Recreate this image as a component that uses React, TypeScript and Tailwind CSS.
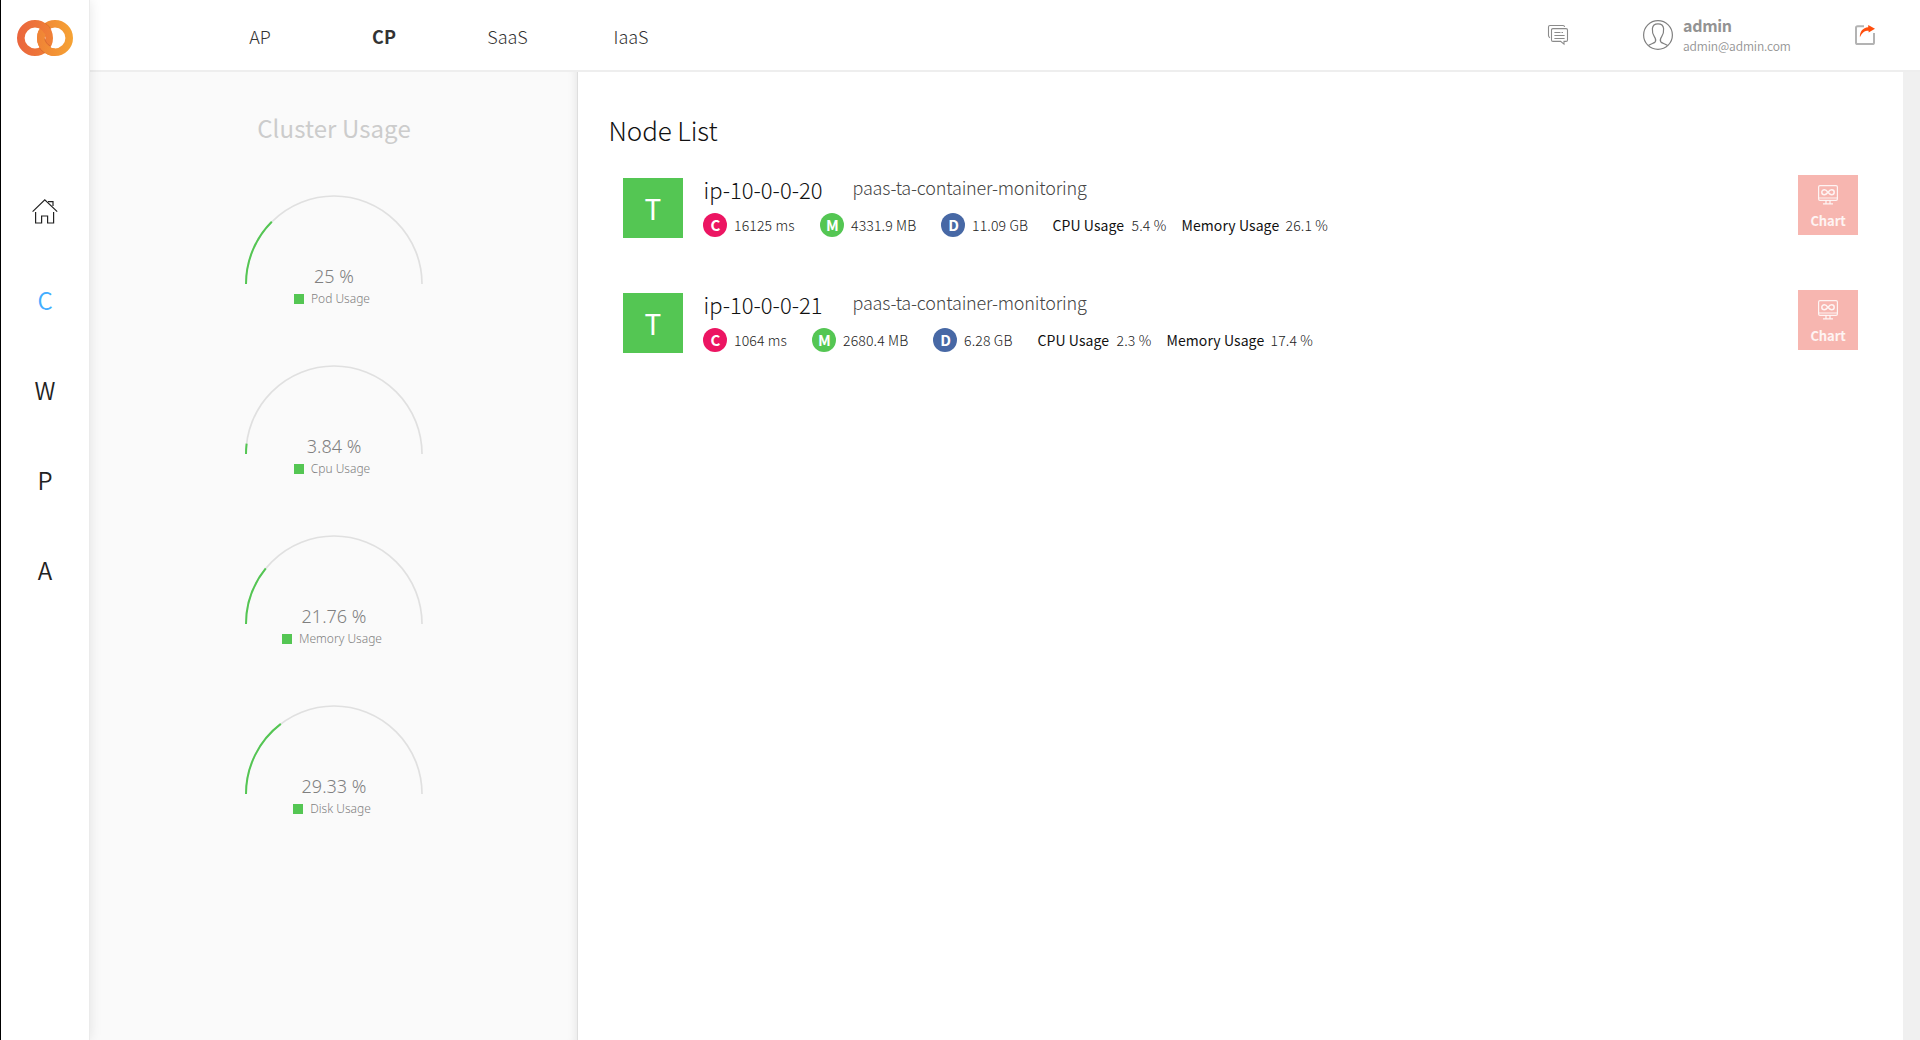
import React from 'react';

const gauges = [
  { label: 'Pod Usage', value: 25 },
  { label: 'Cpu Usage', value: 3.84 },
  { label: 'Memory Usage', value: 21.76 },
  { label: 'Disk Usage', value: 29.33 },
];

const nodes = [
  {
    name: 'ip-10-0-0-20',
    stats: [
      { tag: 'C', color: 'bg-[#ec1562]', value: '16125 ms', width: 'w-[117px]' },
      { tag: 'M', color: 'bg-[#54c653]', value: '4331.9 MB', width: 'w-[121px]' },
      { tag: 'D', color: 'bg-[#4768a5]', value: '11.09 GB', width: 'w-[111.5px]' },
    ],
    cpu: '5.4 %',
    memory: '26.1 %',
  },
  {
    name: 'ip-10-0-0-21',
    stats: [
      { tag: 'C', color: 'bg-[#ec1562]', value: '1064 ms', width: 'w-[109px]' },
      { tag: 'M', color: 'bg-[#54c653]', value: '2680.4 MB', width: 'w-[121px]' },
      { tag: 'D', color: 'bg-[#4768a5]', value: '6.28 GB', width: 'w-[104.5px]' },
    ],
    cpu: '2.3 %',
    memory: '17.4 %',
  },
];

function Logo() {
  return (
    <svg width="58" height="38" viewBox="0 0 58 38" fill="none" className="block">
      <defs>
        <linearGradient id="ringLeft" x1="0" y1="0" x2="38" y2="0" gradientUnits="userSpaceOnUse">
          <stop offset="0" stopColor="#ea643d" />
          <stop offset="1" stopColor="#f08236" />
        </linearGradient>
        <linearGradient id="ringRight" x1="20" y1="0" x2="58" y2="0" gradientUnits="userSpaceOnUse">
          <stop offset="0" stopColor="#ef8136" />
          <stop offset="1" stopColor="#f6a434" />
        </linearGradient>
      </defs>
      <circle cx="39" cy="19" r="14.2" stroke="url(#ringRight)" strokeWidth="7.6" />
      <circle cx="19" cy="19" r="14.2" stroke="url(#ringLeft)" strokeWidth="7.6" />
      <path d="M39 33.2A14.2 14.2 0 0 1 24.8 19A14.2 14.2 0 0 1 26 13.4" stroke="url(#ringRight)" strokeWidth="7.6" />
      <path d="M29.3 4.3C32 6 33.8 8.2 34.8 10.6" stroke="#c9602b" strokeOpacity=".6" strokeWidth="1" />
      <path d="M28.7 19.5C29.2 22.6 31.2 25.4 34.4 27" stroke="#c9602b" strokeOpacity=".6" strokeWidth="1" />
      <path d="M23.6 29C25.2 31.4 27 33 28.9 34" stroke="#c9602b" strokeOpacity=".6" strokeWidth="1" />
    </svg>
  );
}

function HomeIcon() {
  return (
    <svg width="26" height="26" viewBox="0 0 26 26" fill="none" stroke="#222" strokeWidth="1.2" className="block">
      <path d="M.6 12.6L12.8.9L25.2 12.6" />
      <path d="M16 2.6H21V7" />
      <path d="M3.6 13V24H9.6V17H15.6V24H21.6V13" />
    </svg>
  );
}

function CommentsIcon() {
  return (
    <svg width="22" height="22" viewBox="0 0 22 22" fill="none" stroke="#8b8b8b" strokeWidth="1.1" className="block">
      <path d="M3 13.8C1.8 13.2 1.5 12.8 1.5 11.6V3Q1.5 1.5 3 1.5H16Q17.4 1.5 17.6 3" />
      <path d="M6 4.6H19Q20.5 4.6 20.5 6.1V15.9Q20.5 17.4 19 17.4H17V20.2L13.6 17.4H6Q4.5 17.4 4.5 15.9V6.1Q4.5 4.6 6 4.6Z" />
      <path d="M7.4 8.5H13.5M14.5 8.5H16M7.4 11.5H17.6M7.4 14.5H17.6" />
    </svg>
  );
}

function UserIcon() {
  return (
    <svg width="32" height="32" viewBox="0 0 32 32" fill="none" stroke="#808080" strokeWidth="1.2" className="block">
      <circle cx="16" cy="16" r="14.4" />
      <path d="M6.4 26.5C8.6 24.9 12.6 24.1 13.4 22.6C14.2 21 13.6 19.3 12.2 17.3C10.8 15.3 10.2 12 10.4 9.6C10.7 6.4 13 4.8 16 4.8C19 4.8 21.3 6.4 21.6 9.6C21.8 12 21.2 15.3 19.8 17.3C18.4 19.3 17.8 21 18.6 22.6C19.4 24.1 23.4 24.9 25.6 26.5" />
    </svg>
  );
}

function ShareIcon() {
  return (
    <svg width="22" height="22" viewBox="0 0 22 22" fill="none" className="block">
      <path d="M10 2.2H3.6Q2 2.2 2 3.8V18.4Q2 20 3.6 20H18.4Q20 20 20 18.4V9" stroke="#b3b3b3" strokeWidth="2" />
      <path d="M14.2 1L21 4.8L14.6 8.4V6.7C10.4 6.7 8 8.6 5.9 13.2C5.6 7.8 8.8 3.6 14.2 3.2Z" fill="#ff4e0d" />
    </svg>
  );
}

function MonitorIcon() {
  return (
    <svg width="22" height="22" viewBox="0 0 22 22" fill="none" stroke="#fff" strokeOpacity=".85" className="block">
      <rect x="1.6" y="1.6" width="18.8" height="14.8" rx="1.4" strokeWidth="1.2" />
      <path d="M2 14H20" strokeWidth="1" />
      <path d="M9 16.6V19.6M13 16.6V19.6M6 19.9H16" strokeWidth="1.3" />
      <path d="M11 8.3C9.7 6.4 8.8 5.7 7.4 5.7C5.9 5.7 4.8 6.8 4.8 8.2C4.8 9.6 5.9 10.7 7.4 10.7C8.8 10.7 9.7 10 11 8.3C12.3 6.4 13.2 5.7 14.6 5.7C16.1 5.7 17.2 6.8 17.2 8.2C17.2 9.6 16.1 10.7 14.6 10.7C13.2 10.7 12.3 10 11 8.3Z" strokeWidth="1.5" />
    </svg>
  );
}

function Gauge({ label, value }: { label: string; value: number }) {
  return (
    <div className="h-[170px]">
      <svg width="180" height="90" viewBox="0 0 180 90" fill="none" className="mx-auto block">
        <path d="M2 90A88 88 0 0 1 178 90" stroke="#e0e0e0" strokeWidth="1.7" />
        <path d="M2 90A88 88 0 0 1 178 90" stroke="#54c653" strokeWidth="2" pathLength={100} strokeDasharray={`${value} 200`} />
      </svg>
      <div className="-mt-[21px] text-center font-['Noto_Sans','Noto_Sans_CJK_KR',sans-serif] font-light text-[#808080]">
        <div className="text-[18px] leading-[26px]">{value} %</div>
        <div className="mt-[1px] mr-[4px] flex h-[18px] items-center justify-center gap-[7px] text-[12px] leading-[18px]">
          <span className="size-[10px] bg-[#54c653]" />
          <span>{label}</span>
        </div>
      </div>
    </div>
  );
}

function NodeRow({ node }: { node: (typeof nodes)[number] }) {
  return (
    <div className="flex h-[115px]">
      <div className="mt-[3px] flex size-[60px] justify-center bg-[#54c653] text-[28px] leading-[60px] text-white">T</div>
      <div className="ml-5 flex-1 whitespace-nowrap">
        <div className="flex h-[38px] font-light">
          <div className="w-[149.5px] pl-[0.5px] text-[22px] leading-[28px] text-[#111]">{node.name}</div>
          <div className="text-[18px] leading-[24px] tracking-[-0.18px] text-[#444]">paas-ta-container-monitoring</div>
        </div>
        <div className="flex text-[14px] leading-6">
          {node.stats.map((s) => (
            <div key={s.tag} className={`flex ${s.width}`}>
              <span className={`size-6 rounded-full pl-px text-center text-[15px] font-bold text-white ${s.color}`}>{s.tag}</span>
              <span className="ml-[7px] font-light tracking-[0.15px] text-[#222]">{s.value}</span>
            </div>
          ))}
          <span className="w-[79px] tracking-[0.08px] text-[#111]">CPU Usage</span>
          <span className="w-[50px] font-light tracking-[0.15px] text-[#222]">{node.cpu}</span>
          <span className="w-[104px] tracking-[0.08px] text-[#111]">Memory Usage</span>
          <span className="font-light tracking-[0.15px] text-[#222]">{node.memory}</span>
        </div>
      </div>
      <button className="flex size-[60px] flex-col items-center bg-[#f7b6b0] pt-[9px] text-[13px] leading-[20px] font-bold tracking-[-0.1px] text-white/85">
        <MonitorIcon />
        <span className="mt-[5px]">Chart</span>
      </button>
    </div>
  );
}

export default function App() {
  return (
    <div className="flex h-[1040px] w-[1920px] overflow-hidden bg-white font-['Noto_Sans_CJK_KR','Noto_Sans',sans-serif]">
      <aside className="z-10 flex w-[90px] flex-col items-center border-r border-l border-r-[#ebebeb] border-l-black bg-white shadow-[0_0_12px_rgba(0,0,0,0.10)]">
        <div className="mt-[19px] h-[148px]">
          <Logo />
        </div>
        <nav className="flex flex-col text-center text-[24px] leading-[86px] font-[350] text-[#222]">
          <a className="flex h-[90px] items-center justify-center">
            <HomeIcon />
          </a>
          <a className="h-[90px] text-[#42adff]">C</a>
          <a className="h-[90px]">W</a>
          <a className="h-[90px]">P</a>
          <a className="h-[90px]">A</a>
        </nav>
      </aside>

      <div className="flex flex-1 flex-col">
        <header className="flex h-[72px] border-b-2 border-[#eee]">
          <nav className="ml-[108px] flex text-center text-[18px] leading-[72px] font-light text-[#333]">
            <a className="w-[124px]">AP</a>
            <a className="w-[124px] font-bold">CP</a>
            <a className="w-[123px]">SaaS</a>
            <a className="w-[124px]">IaaS</a>
          </nav>
          <div className="ml-auto flex text-[#939393]">
            <div className="mt-6 w-[95px]">
              <CommentsIcon />
            </div>
            <div className="mt-[19px] w-[41px]">
              <UserIcon />
            </div>
            <div className="w-[171px]">
              <div className="mt-[13px] text-[16px] leading-6 font-bold tracking-[-0.3px]">admin</div>
              <div className="text-[12px] leading-[18px] font-[350] tracking-[-0.12px]">admin@admin.com</div>
            </div>
            <div className="mt-6 w-[66px]">
              <ShareIcon />
            </div>
          </div>
        </header>

        <div className="flex flex-1">
          <section className="w-[488px] bg-[#fafafa] shadow-[inset_-1px_0_0_#dedede,inset_-10px_0_10px_-8px_rgba(0,0,0,0.09)]">
            <h2 className="mt-[36px] text-center text-[24px] leading-10 tracking-[0.08px] text-[#ccc]">Cluster Usage</h2>
            <div className="mt-[46px]">
              {gauges.map((g) => (
                <Gauge key={g.label} {...g} />
              ))}
            </div>
          </section>
          <main className="flex-1 pl-[30.5px]">
            <h1 className="mt-[38px] text-[26px] leading-10 font-light tracking-[-0.1px] text-[#111]">Node List</h1>
            <div className="mt-[25px] mr-[45px] ml-[14.5px]">
              {nodes.map((n) => (
                <NodeRow key={n.name} node={n} />
              ))}
            </div>
          </main>
          <div className="w-[17px] bg-[#f0f0f0]" />
        </div>
      </div>
    </div>
  );
}
